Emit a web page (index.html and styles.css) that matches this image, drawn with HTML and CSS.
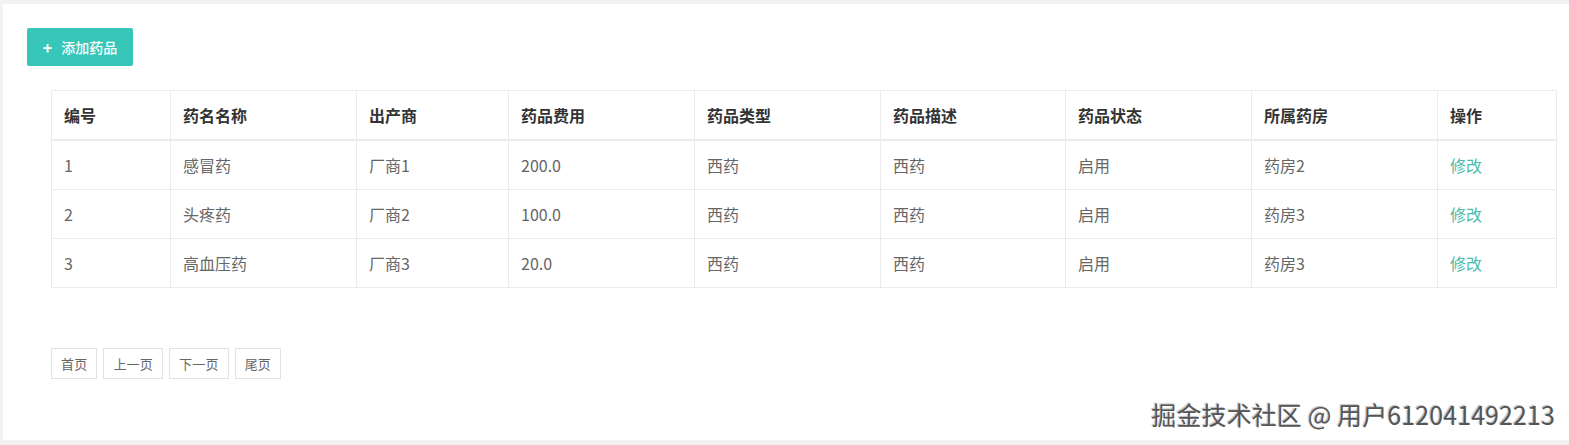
FILE: index.html
```html
<!DOCTYPE html>
<html lang="zh">
<head>
<meta charset="utf-8">
<link rel="stylesheet" href="styles.css">
</head>
<body>
<div class="panel">
  <div class="toolbar">
    <button class="btn-add"><span class="plus">+</span>添加药品</button>
  </div>
  <table class="grid">
    <colgroup>
      <col style="width:119px"><col style="width:186px"><col style="width:152px"><col style="width:186px"><col style="width:186px"><col style="width:185px"><col style="width:186px"><col style="width:186px"><col style="width:119px">
    </colgroup>
    <thead>
      <tr><th>编号</th><th>药名名称</th><th>出产商</th><th>药品费用</th><th>药品类型</th><th>药品描述</th><th>药品状态</th><th>所属药房</th><th>操作</th></tr>
    </thead>
    <tbody>
      <tr><td>1</td><td>感冒药</td><td>厂商1</td><td>200.0</td><td>西药</td><td>西药</td><td>启用</td><td>药房2</td><td><a class="link">修改</a></td></tr>
      <tr><td>2</td><td>头疼药</td><td>厂商2</td><td>100.0</td><td>西药</td><td>西药</td><td>启用</td><td>药房3</td><td><a class="link">修改</a></td></tr>
      <tr><td>3</td><td>高血压药</td><td>厂商3</td><td>20.0</td><td>西药</td><td>西药</td><td>启用</td><td>药房3</td><td><a class="link">修改</a></td></tr>
    </tbody>
  </table>
  <div class="pager">
    <button class="pg">首页</button>
    <button class="pg">上一页</button>
    <button class="pg">下一页</button>
    <button class="pg">尾页</button>
  </div>
  <div class="watermark">掘金技术社区 @ 用户612041492213</div>
</div>
</body>
</html>
```

FILE: styles.css
```css
html, body {
  margin: 0;
  padding: 0;
}
body {
  background: #f2f2f4;
  font-family: "Noto Sans CJK SC", "Noto Sans", sans-serif;
  width: 1569px;
  height: 445px;
  overflow: hidden;
  padding: 4px 0 0 3px;
  box-sizing: border-box;
}
.panel {
  position: relative;
  background: #fff;
  height: 436px;
  padding: 24px 0 0 24px;
  box-sizing: border-box;
}
.toolbar {
  height: 38px;
}
.btn-add {
  height: 38px;
  width: 106px;
  border: none;
  border-radius: 2px;
  background: #37c6b8;
  color: #fff;
  font-family: inherit;
  font-size: 14px;
  font-weight: 500;
  padding: 0;
  display: flex;
  align-items: center;
  justify-content: center;
}
.plus {
  font-size: 16px;
  margin-right: 9px;
  font-weight: 700;
}
.grid {
  margin: 24px 0 0 24px;
  border-collapse: collapse;
  table-layout: fixed;
  width: 1505px;
}
.grid th, .grid td {
  border: 1px solid #ebebeb;
  text-align: left;
  padding: 0 0 0 12px;
  font-size: 16px;
  line-height: 20px;
}
.grid th {
  height: 48px;
  color: #333;
  font-weight: 700;
  border-bottom: 2px solid #ececec;
}
.grid td {
  height: 48px;
  color: #666;
  font-weight: 400;
}
.link {
  color: #4cbcaa;
}
.pager {
  display: flex;
  gap: 6px;
  margin: 60px 0 0 24px;
}
.pg {
  height: 31px;
  padding: 0 9px;
  border: 1px solid #e2e2e2;
  background: #fff;
  color: #666;
  font-family: inherit;
  font-size: 13px;
  letter-spacing: 0.2px;
  border-radius: 0;
}
.watermark {
  position: absolute;
  right: 14px;
  bottom: 8px;
  font-size: 25px;
  letter-spacing: 0.1px;
  color: #555;
  text-shadow: 1px 1px 1px #fff, -1px -1px 1px #bbb;
}
```
